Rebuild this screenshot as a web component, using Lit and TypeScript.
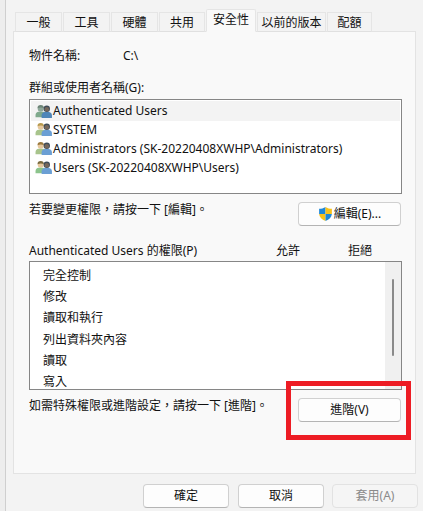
import { LitElement, html, css, svg } from "lit";
import { customElement } from "lit/decorators.js";

const usersIcon = (front: string, back: string, skin: string, hair: string) => html`<svg class="uicon" viewBox="0 0 18 16" width="17" height="15">
  ${svg`<circle cx="6" cy="5" r="3.2" fill="${skin}"/>
  <path d="M2.6 4.4a3.4 3.4 0 0 1 6.8 0c-1.6-1-4.8-1-6.8 0z" fill="${hair}"/>
  <path d="M0.5 14v-2.4c0-2 1.6-3.2 3-3.4h5c1.4.2 3 1.4 3 3.4V14z" fill="${back}"/>
  <circle cx="12.5" cy="5" r="3.4" fill="#3f4c58"/>
  <circle cx="12.5" cy="5.6" r="2.4" fill="#76675a"/>
  <path d="M7 15v-3c0-2 1.6-3.3 3-3.6h5c1.5.3 3 1.6 3 3.6v3z" fill="${front}"/>`}
</svg>`;

const shield = html`<svg viewBox="0 0 16 17" width="15" height="16">
  ${svg`<path d="M8 1 L8 8.5 L1.2 8.5 L1.2 3 C3.6 3 6 2.4 8 1z" fill="#1e88d8"/>
  <path d="M8 1 C10 2.4 12.4 3 14.8 3 L14.8 8.5 L8 8.5z" fill="#f7c21b"/>
  <path d="M1.2 8.5 L8 8.5 L8 16 C4 14.6 1.6 12 1.2 8.5z" fill="#f7c21b"/>
  <path d="M8 8.5 L14.8 8.5 C14.4 12 12 14.6 8 16z" fill="#1e88d8"/>`}
</svg>`;

@customElement("app-root")
export class AppRoot extends LitElement {
  static styles = css`
    :host {
      display: block;
      position: relative;
      width: 423px;
      height: 511px;
      overflow: hidden;
      background: #f3f3f3;
      color: #111;
      font-family: "Noto Sans", "Noto Sans CJK TC", sans-serif;
      font-size: 12px;
      line-height: 16px;
    }
    .window {
      box-sizing: border-box;
      height: 511px;
      margin-left: 5px;
      padding: 9px 5px 0 7px;
      border-left: 1px solid #cfcfcf;
      background: #f3f3f3;
    }
    :host::before {
      content: "";
      position: absolute;
      inset: 0 auto 0 0;
      width: 5px;
      background: #ededed;
    }
    .tabs {
      display: flex;
      height: 23px;
      align-items: flex-end;
      padding-left: 2px;
      position: relative;
      z-index: 1;
      margin-bottom: -1px;
    }
    .tab {
      box-sizing: border-box;
      height: 20px;
      border: 1px solid #e5e5e5;
      border-bottom: 1px solid #e0e0e0;
      margin-right: 1px;
      padding-top: 2px;
      background: #f3f3f3;
      display: flex;
      align-items: center;
      justify-content: center;
      white-space: nowrap;
    }
    .tab.active {
      height: 23px;
      background: #f9f9f9;
      border-bottom-color: #f9f9f9;
      padding-top: 0;
      padding-bottom: 1px;
      border-radius: 2px 2px 0 0;
    }
    .panel {
      box-sizing: border-box;
      width: 403px;
      height: 443px;
      border: 1px solid #e3e3e3;
      background: #f9f9f9;
      padding: 16px 13px 0 15px;
    }
    .obj {
      display: flex;
      height: 16px;
      margin-bottom: 16px;
    }
    .obj .k { width: 94px; }
    .glabel { height: 16px; margin-bottom: 3px; }
    .list {
      box-sizing: border-box;
      width: 373px;
      border: 1px solid #868686;
      background: #fff;
    }
    .groups { height: 95px; padding: 1px 1px 0; }
    .grow {
      height: 19px;
      display: flex;
      align-items: center;
      padding-left: 4px;
      gap: 1px;
      white-space: nowrap;
    }
    .grow:first-child { background: #f3f3f3; height: 20px; margin-bottom: -1px; }
    .uicon { flex: none; }
    .action {
      display: flex;
      justify-content: space-between;
      align-items: flex-start;
      width: 372px;
    }
    .btn {
      box-sizing: border-box;
      display: flex;
      align-items: center;
      justify-content: center;
      gap: 1px;
      background: #fdfdfd;
      border: 1px solid #d0d0d0;
      border-bottom-color: #b4b4b4;
      border-radius: 4px;
      white-space: nowrap;
    }
    .side { width: 103px; height: 24px; }
    .a1 { margin-top: 8px; }
    .phead {
      display: flex;
      height: 16px;
      margin: 17px 0 2px;
    }
    .phead .t { width: 247px; }
    .phead .a { width: 72px; }
    .perms {
      height: 129px;
      display: flex;
      overflow: hidden;
    }
    .pitems { flex: 1; padding: 3px 0 0 13px; }
    .pitem { height: 21.3px; display: flex; align-items: center; white-space: nowrap; }
    .sb {
      width: 16px;
      background: #f0f0f0;
      display: flex;
      flex-direction: column;
      align-items: center;
      padding-top: 17px;
      box-sizing: border-box;
    }
    .thumb { width: 2px; height: 77px; background: #8a8a8a; border-radius: 1px; }
    .a2 { margin-top: 8px; }
    .footer {
      display: flex;
      justify-content: flex-end;
      gap: 9px;
      margin-top: 10px;
    }
    .fbtn { width: 86px; height: 24px; }
    .fbtn.dis { background: #f5f5f5; border-color: #e2e2e2; color: #8a8a8a; margin-left: -1px; }
    .mark {
      position: absolute;
      left: 286px;
      top: 381px;
      width: 125px;
      height: 59px;
      box-sizing: border-box;
      border: 5px solid #ed1c24;
      pointer-events: none;
    }
  `;

  render() {
    const tabs = [
      ["一般", 47], ["工具", 47], ["硬體", 47], ["共用", 46],
      ["安全性", 50], ["以前的版本", 69], ["配額", 45],
    ] as const;
    const perms = ["完全控制", "修改", "讀取和執行", "列出資料夾內容", "讀取", "寫入"];
    return html`
      <div class="window">
        <div class="tabs">
          ${tabs.map(([t, w]) => html`<div class="tab ${t === "安全性" ? "active" : ""}" style="width:${w}px">${t}</div>`)}
        </div>
        <div class="panel">
          <div class="obj"><span class="k">物件名稱:</span><span>C:\\</span></div>
          <div class="glabel">群組或使用者名稱(G):</div>
          <div class="list groups">
            <div class="grow">${usersIcon("#4f86b8", "#7fa98c", "#8fa89a", "#6d8577")}Authenticated Users</div>
            <div class="grow">${usersIcon("#6b9fd4", "#a8c48c", "#e6c79c", "#b89a4e")}SYSTEM</div>
            <div class="grow">${usersIcon("#6b9fd4", "#a8c48c", "#e6c79c", "#9c7a3e")}Administrators (SK-20220408XWHP\\Administrators)</div>
            <div class="grow">${usersIcon("#6b9fd4", "#8cc48c", "#e6c79c", "#7a6a3e")}Users (SK-20220408XWHP\\Users)</div>
          </div>
          <div class="action a1">
            <span>若要變更權限，請按一下 [編輯]。</span>
            <div class="btn side">${shield}編輯(E)...</div>
          </div>
          <div class="phead">
            <span class="t">Authenticated Users 的權限(P)</span>
            <span class="a">允許</span>
            <span>拒絕</span>
          </div>
          <div class="list perms">
            <div class="pitems">${perms.map((p) => html`<div class="pitem">${p}</div>`)}</div>
            <div class="sb"><div class="thumb"></div></div>
          </div>
          <div class="action a2">
            <span>如需特殊權限或進階設定，請按一下 [進階]。</span>
            <div class="btn side">進階(V)</div>
          </div>
        </div>
        <div class="footer">
          <div class="btn fbtn">確定</div>
          <div class="btn fbtn">取消</div>
          <div class="btn fbtn dis">套用(A)</div>
        </div>
      </div>
      <div class="mark"></div>
    `;
  }
}
